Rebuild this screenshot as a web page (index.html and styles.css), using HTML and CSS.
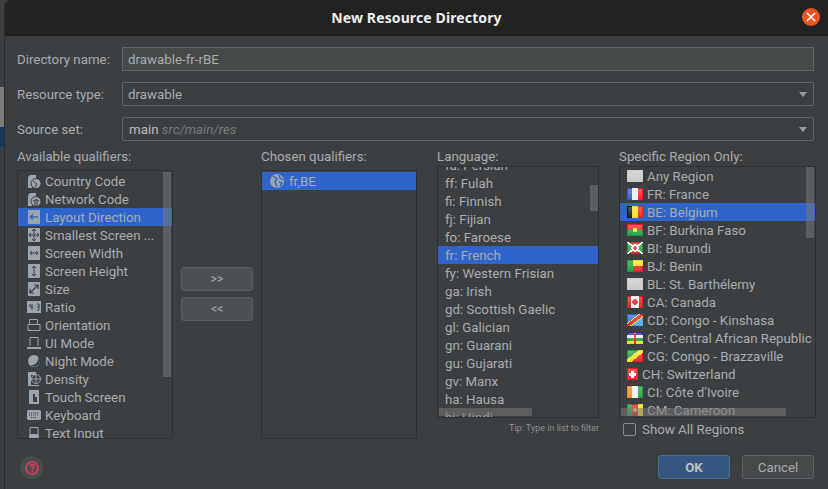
FILE: index.html
```html
<!DOCTYPE html>
<html lang="en">
<head>
    <meta charset="UTF-8">
    <title>New Resource Directory</title>
    <link rel="stylesheet" href="styles.css">
</head>
<body>
    <!-- IDE window peeking out behind the dialog -->
    <div class="behind">
        <span class="behind-a"></span>
        <span class="behind-b"></span>
    </div>

    <div class="dialog">
        <div class="titlebar">
            <span class="title">New Resource Directory</span>
            <span class="close">
                <svg width="12" height="12" viewBox="0 0 12 12"><path d="M2 2 L10 10 M10 2 L2 10" stroke="#fff" stroke-width="1.6"/></svg>
            </span>
        </div>

        <div class="content">
            <div class="form-row">
                <label>Directory name:</label>
                <div class="field field-input">drawable-fr-rBE</div>
            </div>
            <div class="form-row">
                <label>Resource type:</label>
                <div class="field">drawable<span class="arrow"></span></div>
            </div>
            <div class="form-row">
                <label>Source set:</label>
                <div class="field field-src">main <i>src/main/res</i><span class="arrow"></span></div>
            </div>

            <div class="columns">
                <div class="col col-available">
                    <div class="col-label">Available qualifiers:</div>
                    <div class="list list-tall">
                        <div class="rows">
                            <div class="row"><svg class="ic" viewBox="0 0 14 14"><path d="M1 3 L3 1 H9 V8 H1Z M1 8 H5 V14 H1Z" fill="#9aa5ae"/><circle cx="9" cy="9.500" r="5" fill="#9aa5ae" stroke="#3c3f41"/><path d="M6 7 L10 10 L8 13" stroke="#3c3f41" fill="none"/></svg>Country Code</div>
                            <div class="row"><svg class="ic" viewBox="0 0 14 14"><path d="M1 3 L3 1 H9 V8 H1Z M1 8 H5 V14 H1Z" fill="#9aa5ae"/><circle cx="9" cy="9.500" r="5" fill="#9aa5ae" stroke="#3c3f41"/><path d="M8 14 V8 M10 14 V8 M6 9 Q9 6 12 9" stroke="#3c3f41" fill="none"/></svg>Network Code</div>
                            <div class="row selected"><svg class="ic" viewBox="0 0 14 14"><rect width="12" height="14" x="1" fill="#9aa5ae"/><path d="M3 7 H11 M3 7 L6 4.500 M3 7 L6 9.500" stroke="#2f65ca" stroke-width="1.500" fill="none"/></svg>Layout Direction</div>
                            <div class="row"><svg class="ic" viewBox="0 0 14 14"><rect width="12" height="14" x="1" fill="#9aa5ae"/><path d="M7 1 V13 M2 7 H12 M5 3 L7 1 L9 3 M5 11 L7 13 L9 11 M4 5 L2 7 L4 9 M10 5 L12 7 L10 9" stroke="#3c3f41" fill="none"/></svg>Smallest Screen ...</div>
                            <div class="row"><svg class="ic" viewBox="0 0 14 14"><rect width="12" height="14" x="1" fill="#9aa5ae"/><path d="M3 7 H11 M5 5 L3 7 L5 9 M9 5 L11 7 L9 9" stroke="#3c3f41" fill="none"/></svg>Screen Width</div>
                            <div class="row"><svg class="ic" viewBox="0 0 14 14"><rect width="12" height="14" x="1" fill="#9aa5ae"/><path d="M7 2 V12 M5 4 L7 2 L9 4 M5 10 L7 12 L9 10" stroke="#3c3f41" fill="none"/></svg>Screen Height</div>
                            <div class="row"><svg class="ic" viewBox="0 0 14 14"><rect width="12" height="14" x="1" fill="#9aa5ae"/><path d="M3 11 L11 3 M7 3 H11 V7 M3 7 V11 H7" stroke="#3c3f41" stroke-width="1.200" fill="none"/></svg>Size</div>
                            <div class="row"><svg class="ic" viewBox="0 0 14 14"><rect width="14" height="12" y="1" fill="#9aa5ae"/><path d="M3 4 V7 H6 M5 4 V10 M8 5 V5.500 M8 8 V8.500 M10 4 H12 V10 H10 M10 7 H12" stroke="#3c3f41" fill="none"/></svg>Ratio</div>
                            <div class="row"><svg class="ic" viewBox="0 0 14 14"><path d="M2.500 6 V1.500 H10.500 V6 M1 6.500 H13 V12.500 H1Z" stroke="#9aa5ae" fill="none"/></svg>Orientation</div>
                            <div class="row"><svg class="ic" viewBox="0 0 14 14"><path d="M3 10 V1.500 H11 V10" stroke="#9aa5ae" fill="none"/><rect y="11" width="14" height="2" fill="#9aa5ae"/></svg>UI Mode</div>
                            <div class="row"><svg class="ic" viewBox="0 0 14 14"><circle cx="7" cy="7" r="6" fill="#9aa5ae"/><path d="M11 2 A6 6 0 0 1 3 11 A7 7 0 0 0 11 2Z" fill="#3c3f41"/></svg>Night Mode</div>
                            <div class="row"><svg class="ic" viewBox="0 0 14 14"><path d="M1 0 H9 V3 H1Z M1 3 H4 V14 H1Z M1 13 H12 V14 H1Z" fill="#9aa5ae"/><circle cx="9" cy="7" r="4.500" stroke="#9aa5ae" fill="none"/><path d="M9 3 V11 M5 7 H13" stroke="#9aa5ae"/></svg>Density</div>
                            <div class="row"><svg class="ic" viewBox="0 0 14 14"><rect x="2" width="10" height="14" fill="#9aa5ae"/><path d="M6 12 V4 H8 V7 H10 V12Z" fill="#3c3f41"/></svg>Touch Screen</div>
                            <div class="row"><svg class="ic" viewBox="0 0 14 14"><rect y="2" width="14" height="10" rx="1.500" fill="#9aa5ae"/><path d="M2 5 H12 M2 7 H12 M4 9.500 H10" stroke="#3c3f41" stroke-dasharray="1 1"/></svg>Keyboard</div>
                            <div class="row"><svg class="ic" viewBox="0 0 14 14"><path d="M3 1.500 H11 V8.500 H3Z" stroke="#9aa5ae" fill="none"/><rect x="2" y="9" width="10" height="5" fill="#9aa5ae"/></svg>Text Input</div>
                        </div>
                        <span class="scroll-v scroll-available"></span>
                    </div>
                </div>

                <div class="mover">
                    <button class="btn-move">&gt;&gt;</button>
                    <button class="btn-move">&lt;&lt;</button>
                </div>

                <div class="col col-chosen">
                    <div class="col-label">Chosen qualifiers:</div>
                    <div class="list list-tall">
                        <div class="rows">
                            <div class="row selected row-chosen"><svg class="ic" viewBox="0 0 14 14"><circle cx="7" cy="7" r="7" fill="#9aa5ae"/><path d="M3 2 L7 5 L5 8 L7 13 M9 1 L10 4 L13 6 M9 8 L12 9 L10 12" stroke="#2f65ca" stroke-width="1.400" fill="none"/></svg>fr,BE</div>
                        </div>
                    </div>
                </div>

                <div class="col col-language">
                    <div class="col-label col-label-tight">Language:</div>
                    <div class="list list-short">
                        <div class="rows rows-language">
                            <div class="row">fa: Persian</div>
                            <div class="row">ff: Fulah</div>
                            <div class="row">fi: Finnish</div>
                            <div class="row">fj: Fijian</div>
                            <div class="row">fo: Faroese</div>
                            <div class="row selected">fr: French</div>
                            <div class="row">fy: Western Frisian</div>
                            <div class="row">ga: Irish</div>
                            <div class="row">gd: Scottish Gaelic</div>
                            <div class="row">gl: Galician</div>
                            <div class="row">gn: Guarani</div>
                            <div class="row">gu: Gujarati</div>
                            <div class="row">gv: Manx</div>
                            <div class="row">ha: Hausa</div>
                            <div class="row">hi: Hindi</div>
                        </div>
                        <span class="scroll-v scroll-language"></span>
                        <span class="scroll-h scroll-h-language"></span>
                    </div>
                    <div class="tip">Tip: Type in list to filter</div>
                </div>

                <div class="col col-region">
                    <div class="col-label col-label-tight">Specific Region Only:</div>
                    <div class="list list-short">
                        <div class="rows rows-region">
                            <div class="row"><span class="flag flag-blank"></span>Any Region</div>
                            <div class="row"><span class="flag flag-fr"></span>FR: France</div>
                            <div class="row selected"><span class="flag flag-be"></span>BE: Belgium</div>
                            <div class="row"><span class="flag flag-bf"></span>BF: Burkina Faso</div>
                            <div class="row"><span class="flag flag-bi"></span>BI: Burundi</div>
                            <div class="row"><span class="flag flag-bj"></span>BJ: Benin</div>
                            <div class="row"><span class="flag flag-blank"></span>BL: St. Barthélemy</div>
                            <div class="row"><span class="flag flag-ca"></span>CA: Canada</div>
                            <div class="row"><span class="flag flag-cd"></span>CD: Congo - Kinshasa</div>
                            <div class="row"><span class="flag flag-cf"></span>CF: Central African Republic</div>
                            <div class="row"><span class="flag flag-cg"></span>CG: Congo - Brazzaville</div>
                            <div class="row"><span class="flag flag-ch"></span>CH: Switzerland</div>
                            <div class="row"><span class="flag flag-ci"></span>CI: Côte d’Ivoire</div>
                            <div class="row"><span class="flag flag-cm"></span>CM: Cameroon</div>
                        </div>
                        <span class="scroll-v scroll-region"></span>
                        <span class="scroll-h scroll-h-region"></span>
                    </div>
                    <label class="check"><span class="box"></span>Show All Regions</label>
                </div>
            </div>

            <div class="footer">
                <span class="help">
                    <svg width="18" height="18" viewBox="0 0 18 18"><circle cx="9" cy="9" r="6" fill="none" stroke="#e8385f" stroke-width="1.600"/><text x="9" y="13" text-anchor="middle" class="help-mark">?</text></svg>
                </span>
                <div class="buttons">
                    <button class="btn btn-ok">OK</button>
                    <button class="btn">Cancel</button>
                </div>
            </div>
        </div>
    </div>
</body>
</html>
```

FILE: styles.css
```css
html, body {
    margin: 0;
    padding: 0;
    height: 489px;
    overflow: hidden;
}

body {
    display: flex;
    width: 828px;
    background-color: #3c3f41;
    color: #a9acae;
    font-family: Roboto, sans-serif;
    font-size: 13.3px;
}

.behind {
    width: 4px;
    flex: none;
    position: relative;
    background-color: #3c3f41;
}

.behind-a {
    position: absolute;
    left: 0;
    top: 87px;
    width: 4px;
    height: 40px;
    background-color: #7a7a7a;
}

.behind-b {
    position: absolute;
    left: 0;
    top: 127px;
    width: 4px;
    height: 20px;
    background-color: #113a5c;
}

.dialog {
    flex: 1;
    display: flex;
    flex-direction: column;
    border-left: 1px solid #2b2b2b;
    border-top-left-radius: 6px;
    min-width: 0;
}

.titlebar {
    height: 35px;
    flex: none;
    display: flex;
    align-items: center;
    justify-content: center;
    position: relative;
    background-color: #222222;
    border-bottom: 1px solid #191919;
    border-top-left-radius: 6px;
}

.title {
    color: #eeeeee;
    font-family: "Noto Sans", sans-serif;
    font-weight: 700;
    font-size: 14px;
    letter-spacing: 0.12px;
}

.close {
    position: absolute;
    right: 8px;
    top: 8px;
    width: 18px;
    height: 18px;
    border-radius: 50%;
    background-color: #e95420;
    display: flex;
    align-items: center;
    justify-content: center;
}

.content {
    flex: 1;
    display: flex;
    flex-direction: column;
    padding: 11px 12px 0 12px;
}

.form-row {
    display: flex;
    align-items: center;
    height: 24px;
    margin: 0 2px 11px 0;
}

.form-row label {
    width: 105px;
    flex: none;
}

.field {
    flex: 1;
    height: 24px;
    box-sizing: border-box;
    border: 1px solid #646464;
    border-radius: 2px;
    padding: 0 5px;
    line-height: 23px;
    position: relative;
}

.field-input {
    background-color: #45494a;
    border-radius: 0;
}

.field-src {
    padding-left: 6px;
    color: #bbbbbb;
}

.field-src i {
    color: #777a7c;
}

.arrow {
    position: absolute;
    right: 6px;
    top: 9px;
    border-left: 4px solid transparent;
    border-right: 4px solid transparent;
    border-top: 5px solid #9a9a9a;
}

.columns {
    display: flex;
    height: 300px;
    margin-top: -4px;
}

.col-label {
    height: 22px;
    line-height: 18px;
}

.col-label-tight {
    height: 18px;
}

.col-available { width: 156px; }
.col-chosen { width: 156px; margin-right: 20px; }
.col-language { width: 162px; margin-right: 20px; }
.col-region { width: 197px; }

.mover {
    width: 88px;
    flex: none;
    display: flex;
    flex-direction: column;
    align-items: center;
    padding-top: 119px;
    gap: 6px;
    box-sizing: border-box;
}

.btn-move {
    width: 72px;
    height: 24px;
    background-color: #4c5052;
    border: 1px solid #5a5d5f;
    border-radius: 3px;
    color: #a9acae;
    font: inherit;
    font-size: 12px;
    padding: 0;
}

.list {
    position: relative;
    border: 1px solid #2f3234;
    overflow: hidden;
    box-sizing: border-box;
}

.list-tall { height: 269px; }
.list-short { height: 252px; }

.rows { padding-top: 1px; }

.row {
    height: 18px;
    line-height: 16px;
    box-sizing: border-box;
    padding-top: 2px;
    white-space: nowrap;
    display: flex;
    align-items: center;
    padding-left: 9px;
}

.row.selected {
    background-color: #2f65ca;
}

.row-chosen { padding-left: 8px; }

.rows-language { margin-top: -11px; padding-top: 0; }
.rows-language .row { padding-left: 7px; }

.rows-region { padding-top: 0; }
.rows-region .row { padding-left: 7px; }

.ic {
    width: 14px;
    height: 14px;
    flex: none;
    margin: -2px 4px 0 0;
}

.row-chosen .ic { margin-right: 5px; }

/* Flags */
.flag {
    width: 16px;
    height: 12px;
    flex: none;
    margin: -2px 4px 0 0;
    position: relative;
    background-color: #ffffff;
}

/* the light gloss on the inside of each flag */
.flag::after {
    content: "";
    position: absolute;
    inset: 1px;
    background: linear-gradient(rgba(255, 255, 255, 0.28), rgba(255, 255, 255, 0.08));
}

.flag-blank { background: #c8c8c8; }
.flag-fr { background: linear-gradient(90deg, #3a55b8 33%, #eeeeee 33% 66%, #ee1c25 66%); }
.flag-be { background: linear-gradient(90deg, #111111 33%, #f5e020 33% 66%, #ee1c25 66%); }
.flag-bf { background: radial-gradient(circle, #f5e020 2px, transparent 2.5px), linear-gradient(#e02020 50%, #1e9a3a 50%); }
.flag-bi { background: radial-gradient(circle, #e02020 1.500px, #ffffff 2px, #ffffff 3.500px, transparent 4px), linear-gradient(37deg, transparent 46%, #fff 46% 54%, transparent 54%), linear-gradient(-37deg, transparent 46%, #fff 46% 54%, transparent 54%), conic-gradient(#e02020 0 12%, #1e9a3a 12% 38%, #e02020 38% 62%, #1e9a3a 62% 88%, #e02020 88%); }
.flag-bj { background: linear-gradient(90deg, #1e9a3a 40%, transparent 40%), linear-gradient(#f5e020 50%, #e02020 50%); }
.flag-ca { background: radial-gradient(circle, #d81e1e 2.500px, transparent 3px), linear-gradient(90deg, #d81e1e 25%, #eeeeee 25% 75%, #d81e1e 75%); }
.flag-cd { background: linear-gradient(-37deg, #4aa8e0 38%, #f5e020 38% 42%, #d81e1e 42% 58%, #f5e020 58% 62%, #2a6ad0 62%); }
.flag-cf { background: linear-gradient(90deg, transparent 44%, #d81e1e 44% 56%, transparent 56%), linear-gradient(#1e2a9a 25%, #eeeeee 25% 50%, #1e9a3a 50% 75%, #f5e020 75%); }
.flag-cg { background: linear-gradient(143deg, #1e9a3a 38%, #f5e020 38% 62%, #e02020 62%); }
.flag-ch { width: 11px; background: linear-gradient(#fff, #fff) center/7px 3px no-repeat, linear-gradient(#fff, #fff) center/3px 7px no-repeat, #ee1c25; }
.flag-ci { background: linear-gradient(90deg, #f08a20 33%, #eeeeee 33% 66%, #1ea040 66%); }
.flag-cm { background: radial-gradient(circle, #f5e020 1.500px, transparent 2px), linear-gradient(90deg, #1e9a3a 33%, #d81e1e 33% 66%, #f5e020 66%); }

/* Scrollbars sit on top of the rows */
.scroll-v {
    position: absolute;
    width: 8px;
    background-color: rgba(120, 120, 120, 0.55);
}

.scroll-available { top: 1px; height: 205px; right: 1px; }
.scroll-language { top: 18px; height: 26px; right: 0; }
.scroll-region { top: 0; height: 71px; right: 1px; }

.scroll-h {
    position: absolute;
    bottom: 1px;
    height: 8px;
    background-color: rgba(120, 120, 120, 0.55);
}

.scroll-h-language { left: 1px; width: 93px; }
.scroll-h-region { left: 1px; width: 165px; }

.tip {
    font-size: 9px;
    line-height: 14px;
    text-align: right;
    margin-top: 3px;
    color: #8e9193;
}

.check {
    display: flex;
    align-items: center;
    margin-top: 4px;
    margin-left: 4px;
}

.box {
    width: 11px;
    height: 11px;
    border: 1px solid #8a8d8f;
    border-radius: 2px;
    margin-right: 6px;
}

.footer {
    display: flex;
    justify-content: space-between;
    align-items: flex-start;
    margin: 7px 2px 0 0;
}

.help {
    width: 23px;
    height: 23px;
    margin: 1px 0 0 3px;
    border-radius: 50%;
    background-color: #4a4d4f;
    display: flex;
    align-items: center;
    justify-content: center;
}

.help-mark {
    fill: #e8385f;
    font-size: 11px;
    font-weight: 700;
}

.buttons {
    display: flex;
    gap: 12px;
}

.btn {
    width: 72px;
    height: 24px;
    background-color: #45494a;
    border: 1px solid #5e6163;
    border-radius: 3px;
    color: #a9acae;
    font: inherit;
    padding: 0;
}

.btn-ok {
    background-color: #365880;
    border-color: #4c708c;
    color: #b8c0c8;
    font-weight: 700;
}
```
